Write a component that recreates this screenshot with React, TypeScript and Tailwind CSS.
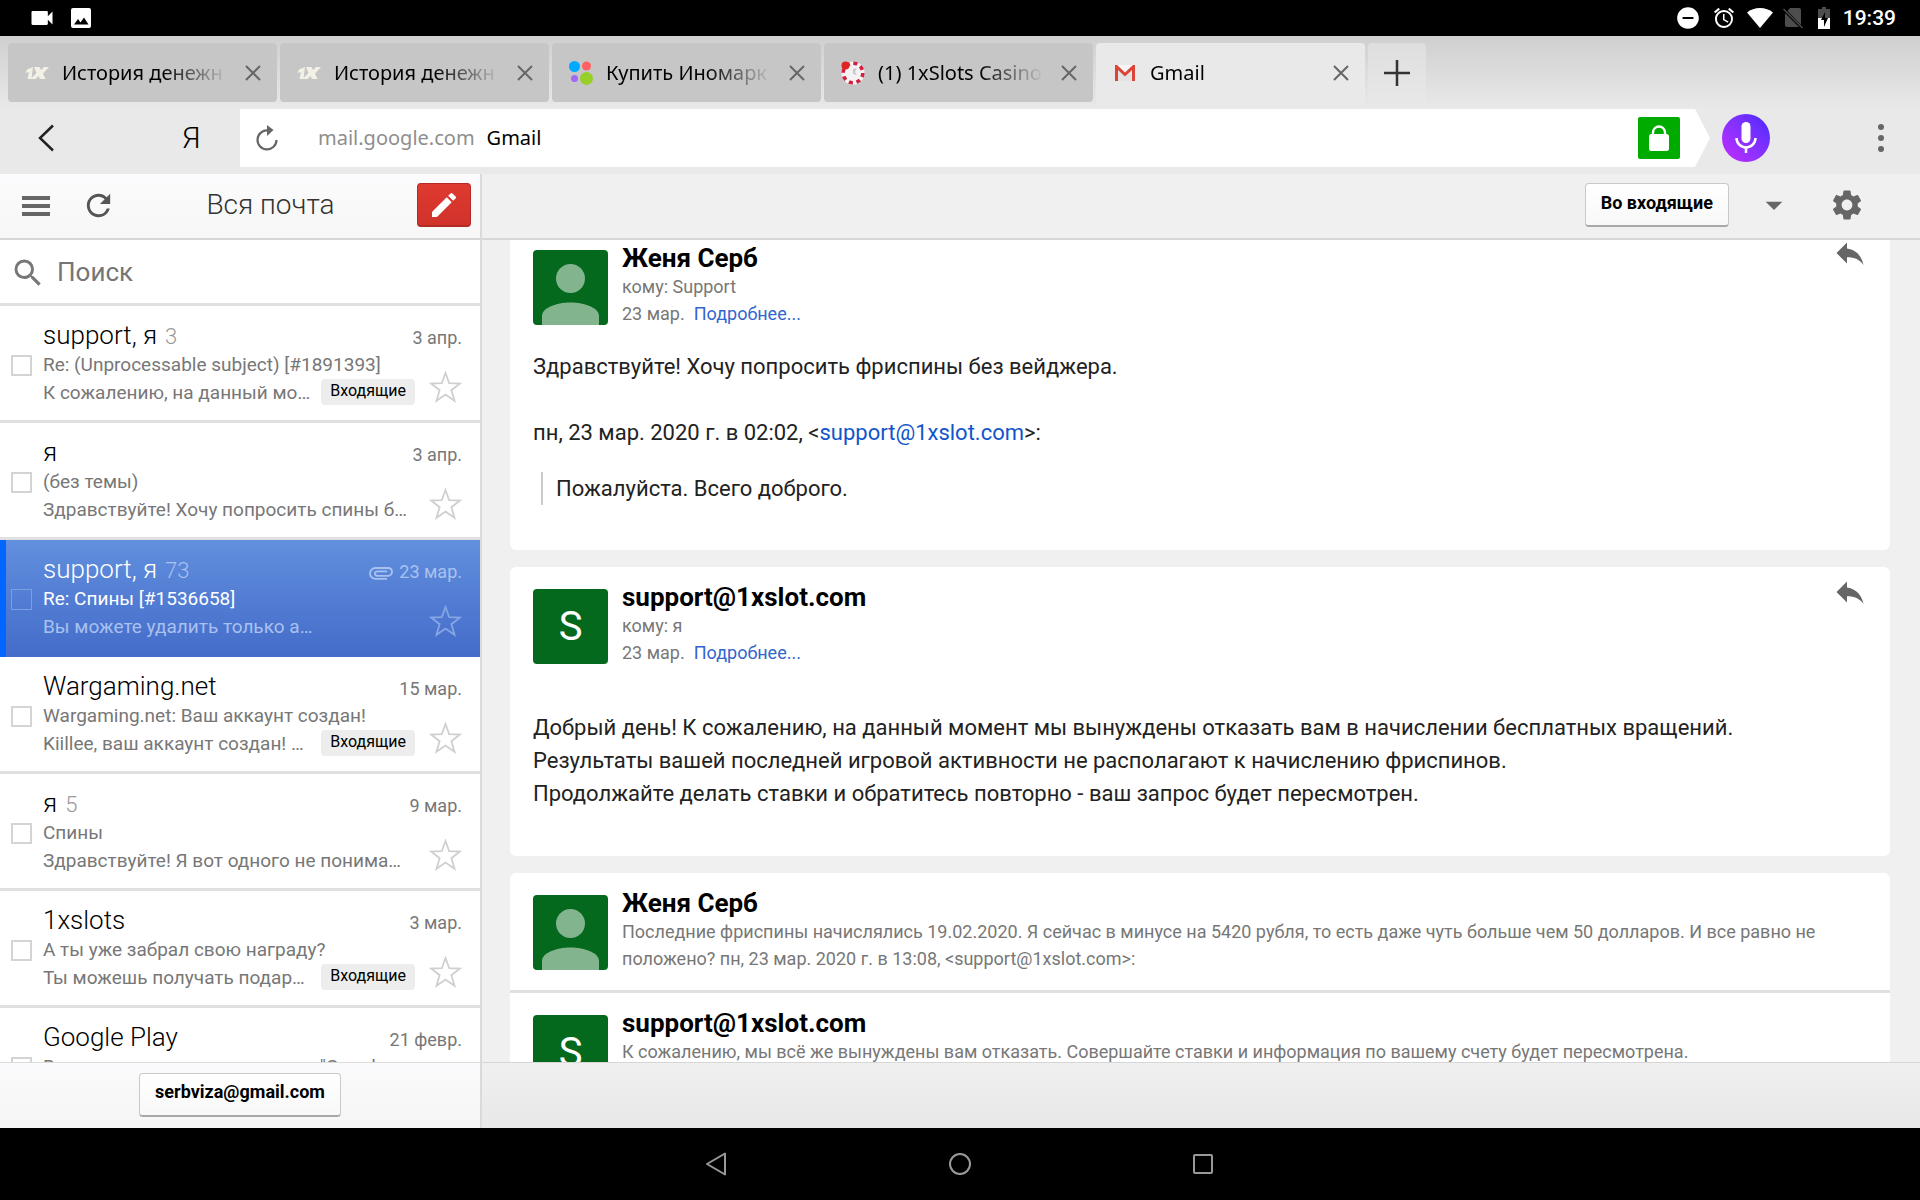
import React from "react";
import {
  MdAlarm,
  MdArrowDropDown,
  MdCreate,
  MdRefresh,
  MdRemoveCircle,
  MdReply,
  MdSearch,
  MdSettings,
  MdVideocam,
} from "react-icons/md";

/* ---------- Small drawings ---------- */

const CloseIcon = () => (
  <svg viewBox="0 0 16 16" className="size-4" fill="none" stroke="#666" strokeWidth="2">
    <path d="M1 1l14 14M15 1L1 15" />
  </svg>
);

const BetIcon = () => (
  <svg viewBox="0 0 24 24" className="size-6">
    <path d="M2 8.500 8 6 6.500 18H2.500L4 11 .5 12z" fill="#f3f0e6" />
    <path d="M9 6h5.500l1.500 3L19 6h5l-6 6.500L20.500 18H15l-1.500-3L10.500 18H5.500l6-6z" fill="#f3f0e6" />
  </svg>
);

const DotsIcon = () => (
  <svg viewBox="0 0 24 24" className="size-6">
    <circle cx="5.500" cy="5.500" r="5.500" fill="#00aaff" />
    <circle cx="17.500" cy="5" r="4.500" fill="#ff6163" />
    <circle cx="5.500" cy="17.500" r="3.500" fill="#a169f7" />
    <circle cx="17.500" cy="17.500" r="6.500" fill="#97cf26" />
  </svg>
);

const ChipIcon = () => (
  <svg viewBox="0 0 24 24" className="size-6">
    <circle cx="12" cy="12" r="11.500" fill="#f6f4f4" />
    <circle cx="12" cy="12" r="9.800" fill="none" stroke="#d3203f" strokeWidth="3.600" strokeDasharray="4.100 3.600" />
    <circle cx="12" cy="12" r="7.500" fill="#f4f3f3" />
    <path d="M12 8l4-1-2 4 2 3-4-1z" fill="#c9c9cc" />
    <circle cx="4.500" cy="4.500" r="4" fill="#e02420" />
  </svg>
);

const GmailIcon = () => (
  <svg viewBox="0 0 24 24" className="size-6">
    <path d="M2 4h20v16H2z" fill="#e3e3e3" />
    <path d="M3 4h18l-9 8z" fill="#f5f5f5" />
    <path d="M2 20V4h2L12 11.500 20 4h2v16h-3V9L12 15.500 5 9v11z" fill="#db4437" />
  </svg>
);

const StarIcon = ({ selected }: { selected?: boolean }) => (
  <svg viewBox="0 0 33 32" className="h-8 w-[33px]" fill="none" stroke={selected ? "#86a6e4" : "#cfcfcf"} strokeWidth="1.800">
    <path d="M16.500 2l3.700 10.200L31 12.500l-8.600 6.700 3.100 10.600-9-6.200-9 6.200 3.100-10.600L2 12.500l10.800-.3z" />
  </svg>
);

const ClipIcon = () => (
  <svg viewBox="0 0 24 13" className="mr-[6px] inline-block h-[13px] w-6" fill="none" stroke="#a9c1ee" strokeWidth="1.800">
    <path d="M18 11.800H6.500C3.200 11.800 1 9.300 1 6.500S3.200 1 6.500 1H19c2.300 0 4 1.600 4 3.800s-1.700 4-4 4H8.500C7 8.800 6 7.800 6 6.500s1-2.200 2.500-2.200H18" />
  </svg>
);

const Person = () => (
  <svg viewBox="0 0 75 75" className="size-[75px] rounded">
    <rect width="75" height="75" fill="#04691d" />
    <circle cx="37.500" cy="28.500" r="14.500" fill="#82b48e" />
    <path d="M9 75v-9c0-8 14-13.500 28.500-13.500S66 58 66 66v9z" fill="#82b48e" />
  </svg>
);

/* ---------- Data ---------- */

const tabs = [
  { title: "История денежн", icon: <BetIcon /> },
  { title: "История денежн", icon: <BetIcon /> },
  { title: "Купить Иномарк", icon: <DotsIcon /> },
  { title: "(1) 1xSlots Casino", icon: <ChipIcon /> },
  { title: "Gmail", icon: <GmailIcon />, active: true },
];

type Mail = {
  from: string;
  count?: string;
  date: string;
  subject: string;
  snippet: string;
  inbox?: boolean;
  clip?: boolean;
  selected?: boolean;
};

const mails: Mail[] = [
  { from: "support, я", count: "3", date: "3 апр.", subject: "Re: (Unprocessable subject) [#1891393]", snippet: "К сожалению, на данный мо…", inbox: true },
  { from: "я", date: "3 апр.", subject: "(без темы)", snippet: "Здравствуйте! Хочу попросить спины б…" },
  { from: "support, я", count: "73", date: "23 мар.", subject: "Re: Спины [#1536658]", snippet: "Вы можете удалить только а…", clip: true, selected: true },
  { from: "Wargaming.net", date: "15 мар.", subject: "Wargaming.net: Ваш аккаунт создан!", snippet: "Kiillee, ваш аккаунт создан! …", inbox: true },
  { from: "я", count: "5", date: "9 мар.", subject: "Спины", snippet: "Здравствуйте! Я вот одного не понима…" },
  { from: "1xslots", date: "3 мар.", subject: "А ты уже забрал свою награду?", snippet: "Ты можешь получать подар…", inbox: true },
  { from: "Google Play", date: "21 февр.", subject: "Вы присоединились к проекту \"Google", snippet: "" },
];

/* ---------- Pieces ---------- */

function StatusBar() {
  return (
    <div className="flex h-9 shrink-0 items-center bg-black pr-6 pl-7 text-white">
      <MdVideocam className="size-7" />
      <svg viewBox="0 0 20 20" className="ml-[15px] size-5">
        <rect width="20" height="20" rx="2" fill="#fff" />
        <path d="M3 16.500l4-5.500 2.500 3.500 3.500-5 4.500 7z" fill="#000" />
      </svg>
      <div className="ml-auto flex items-center">
        <MdRemoveCircle className="mr-[11px] size-[26px]" />
        <MdAlarm className="mr-[11px] size-6" />
        <svg viewBox="0 0 26 20" className="mr-[10px] h-5 w-[26px]" fill="#fff">
          <path d="M13 20L0 4.500C3.500 1.500 8 0 13 0s9.500 1.500 13 4.500z" />
        </svg>
        <svg viewBox="0 0 20 22" className="mr-[15px] h-[22px] w-5">
          <path d="M7 1h9a2 2 0 012 2v15L4.500 4zM2 6l14 14H4a2 2 0 01-2-2z" fill="#4d4d4d" />
          <path d="M.5 2l19 19" stroke="#4d4d4d" strokeWidth="1.500" />
        </svg>
        <svg viewBox="0 0 12 22" className="mr-[13px] h-[22px] w-3">
          <path d="M4 0h4v2h4v20H0V2h4z" fill="#4d4d4d" />
          <path d="M0 11h12v11H0z" fill="#fff" />
          <path d="M7 5L3 13h3v7l4-9H7z" fill="#000" />
        </svg>
        <span className="text-[21px] leading-9 font-medium">19:39</span>
      </div>
    </div>
  );
}

function TabStrip() {
  return (
    <div className="flex h-[73px] shrink-0 gap-[3px] bg-linear-to-b from-[#cfcfcf] to-[#e9e9e9] px-2 pt-[7px] font-['Noto_Sans',sans-serif]">
      {tabs.map((tab, i) => (
        <div
          key={i}
          className={
            tab.active
              ? "flex h-[66px] w-[269px] items-center rounded-t bg-[#e9e9e9] pb-[7px]"
              : "flex h-[59px] w-[269px] items-center rounded bg-[#c6c6c6]"
          }
        >
          <button className="flex min-w-0 flex-1 items-center pt-px pl-[17px] text-left">
            {tab.icon}
            <span className="ml-[13px] w-[166px] text-xl whitespace-nowrap text-black [mask-image:linear-gradient(to_right,#000_60%,transparent)]">
              {tab.title}
            </span>
          </button>
          <button aria-label="Закрыть вкладку" className="mr-4 shrink-0">
            <CloseIcon />
          </button>
        </div>
      ))}
      <button aria-label="Новая вкладка" className="flex h-[59px] w-[58px] items-center justify-center rounded-t bg-linear-to-b from-[#dedede] to-[#e8e8e8]">
        <svg viewBox="0 0 26 26" className="size-[26px]" stroke="#333" strokeWidth="2.500">
          <path d="M13 0v26M0 13h26" />
        </svg>
      </button>
    </div>
  );
}

function AddressBar() {
  return (
    <div className="flex h-[65px] shrink-0 items-start bg-[#e9e9e9] font-['Noto_Sans',sans-serif]">
      <div className="flex h-[58px] w-60 items-center">
        <button aria-label="Назад" className="ml-[38px]">
          <svg viewBox="0 0 16 28" className="h-7 w-4" fill="none" stroke="#222" strokeWidth="2.500">
            <path d="M15 1.500L2 14l13 12.500" />
          </svg>
        </button>
        <button className="ml-[128px] font-[Roboto] text-[30px] leading-none font-light text-black">Я</button>
      </div>
      <div className="flex h-[58px] flex-1 items-center bg-white pl-[15px] [clip-path:polygon(0_0,calc(100%_-_15px)_0,100%_50%,calc(100%_-_15px)_100%,0_100%)]">
        <button aria-label="Обновить">
          <svg viewBox="0 0 24 28" className="h-7 w-6">
            <path d="M13 6.500A9.500 9.500 0 1 0 21.500 16" fill="none" stroke="#666" strokeWidth="2.200" />
            <path d="M12 1v11l6.500-6z" fill="#666" />
          </svg>
        </button>
        <a href="#address" className="ml-[39px] text-xl text-[#8e8e8e]">
          mail.google.com<span className="ml-3 text-black">Gmail</span>
        </a>
        <button aria-label="Защищённое соединение" className="mr-[30px] ml-auto flex size-[42px] items-center justify-center rounded-xs bg-[#00ab00]">
          <svg viewBox="0 0 20 26" className="h-[26px] w-5">
            <path d="M4 11V7.500a6 6 0 0112 0V11" fill="none" stroke="#fff" strokeWidth="2.400" />
            <rect y="9" width="20" height="17" rx="2.500" fill="#fff" />
          </svg>
        </button>
      </div>
      <div className="flex h-[58px] w-[210px] items-center">
        <button aria-label="Голосовой поиск" className="ml-3 flex size-12 items-center justify-center rounded-full bg-linear-to-tr from-[#c325ff] to-[#4725ff]">
          <svg viewBox="0 0 22 32" className="h-8 w-[22px]">
            <rect x="6.500" width="9" height="21" rx="4.500" fill="#fff" />
            <path d="M1.500 16a9.500 9.500 0 0019 0M11 25.500V31" fill="none" stroke="#fff" strokeWidth="2.500" />
          </svg>
        </button>
        <button aria-label="Меню" className="mr-9 ml-auto flex flex-col gap-[5px]">
          <span className="size-[6px] rounded-full bg-[#666]" />
          <span className="size-[6px] rounded-full bg-[#666]" />
          <span className="size-[6px] rounded-full bg-[#666]" />
        </button>
      </div>
    </div>
  );
}

function MailRow({ mail }: { mail: Mail }) {
  const sel = mail.selected;
  return (
    <li
      className={
        sel
          ? "flex h-[117px] bg-linear-to-b from-[#628fde] to-[#446cc9] pr-[18px] pl-[11px] text-[#a9c1ee] shadow-[inset_6px_0_0_#0066ff]"
          : "flex h-[117px] border-b-[3px] border-[#e0e0e0] bg-white pr-[18px] pl-[11px] text-[#777]"
      }
    >
      <input
        type="checkbox"
        aria-label={mail.subject}
        className={
          sel
            ? "mt-[49px] mr-[11px] size-[21px] shrink-0 appearance-none border border-[#7c9fe3]"
            : "mt-[49px] mr-[11px] size-[21px] shrink-0 appearance-none border-2 border-[#d4d4d4]"
        }
      />
      <div className="min-w-0 flex-1 pt-[13px] whitespace-nowrap">
        <div className="flex h-8 items-baseline">
          <span className={sel ? "text-[26px] leading-8 font-light text-white" : "text-[26px] leading-8 font-light text-black"}>{mail.from}</span>
          {mail.count && (
            <span className={sel ? "ml-2 text-[22px] leading-none font-light" : "ml-2 text-[22px] leading-none font-light text-[#999]"}>{mail.count}</span>
          )}
          <span className="ml-auto text-lg leading-none">
            {mail.clip && <ClipIcon />}
            {mail.date}
          </span>
        </div>
        <div className="flex text-[19px] leading-7">
          <div className="min-w-0 flex-1">
            <div className={sel ? "text-white" : ""}>{mail.subject}</div>
            <div className="flex items-start justify-between">
              <span>{mail.snippet}</span>
              {mail.inbox && <span className="rounded bg-[#ededed] px-[9px] pb-[2px] text-base leading-6 text-black">Входящие</span>}
            </div>
          </div>
          <button aria-label="Пометить" className="mt-5 ml-[14px] self-start">
            <StarIcon selected={sel} />
          </button>
        </div>
      </div>
    </li>
  );
}

const plainButton =
  "rounded border border-b-2 border-[#c9c9c9] border-b-[#a8a8a8] bg-linear-to-b from-white to-[#f8f8f8] font-bold text-black text-lg h-11 px-[15px] pb-1";

function Sidebar() {
  return (
    <aside className="flex w-[482px] shrink-0 flex-col border-r-2 border-[#dadada] bg-white">
      <div className="flex h-[66px] shrink-0 items-center border-b-2 border-[#d6d6d6] bg-linear-to-b from-[#fcfbfd] to-[#f6f7f6] pr-[9px] pb-[2px]">
        <button aria-label="Меню" className="ml-[17px]">
          <svg viewBox="0 0 38 38" className="size-[38px]" fill="#666">
            <path d="M5 10h28v4H5zM5 18h28v4H5zM5 26h28v4H5z" />
          </svg>
        </button>
        <button aria-label="Обновить список" className="ml-[26px]">
          <MdRefresh className="size-[35px] text-[#555]" />
        </button>
        <h1 className="flex-1 pl-2 text-center text-[28px] font-light text-[#333]">Вся почта</h1>
        <button aria-label="Написать" className="flex h-11 w-[54px] items-center justify-center rounded border border-b-2 border-[#b32b24] bg-linear-to-b from-[#df3a30] to-[#d0322b] text-white">
          <MdCreate className="size-8" />
        </button>
      </div>
      <label className="flex h-[66px] shrink-0 items-center border-b-[3px] border-[#e0e0e0] bg-white pt-[2px] pl-[10px]">
        <MdSearch className="size-9 text-[#777]" />
        <input type="search" placeholder="Поиск" aria-label="Поиск" className="ml-[11px] min-w-0 flex-1 text-[26px] outline-none placeholder:text-[#757575]" />
      </label>
      <ul className="min-h-0 flex-1 overflow-hidden">
        {mails.map((m, i) => (
          <MailRow key={i} mail={m} />
        ))}
      </ul>
      <div className="flex h-[66px] shrink-0 items-center justify-center border-t border-[#dcdcdc] bg-linear-to-b from-[#fbfafc] to-[#f5f6f5] pb-[2px]">
        <button className={plainButton}>serbviza@gmail.com</button>
      </div>
    </aside>
  );
}

function Header({ kind, name, children, reply }: { kind: "person" | "letter"; name: string; children: React.ReactNode; reply?: boolean }) {
  return (
    <div className="flex items-start">
      <div className="mt-[7px] shrink-0">
        {kind === "person" ? (
          <Person />
        ) : (
          <div className="flex size-[75px] items-center justify-center rounded bg-[#04691d] text-[40px] text-white">S</div>
        )}
      </div>
      <div className="ml-[14px] flex-1 text-lg leading-[27px] text-[#777]">
        <h2 className="text-[26px] leading-[30px] font-bold text-black">{name}</h2>
        {children}
      </div>
      {reply && (
        <button aria-label="Ответить">
          <MdReply className="-mt-2 size-9 text-[#666]" />
        </button>
      )}
    </div>
  );
}

const Details = ({ to }: { to: string }) => (
  <>
    <p>кому: {to}</p>
    <p>
      23 мар.
      <a href="#details" className="ml-[9px] text-[#3366cc]">
        Подробнее...
      </a>
    </p>
  </>
);

function Conversation() {
  return (
    <main className="flex min-w-0 flex-1 flex-col bg-[#f0f0f0]">
      <div className="flex h-[66px] shrink-0 items-center justify-end border-b-2 border-[#d6d6d6] pr-[55px] pb-[2px]">
        <button className={plainButton}>Во входящие</button>
        <button aria-label="Ещё" className="mr-[35px] ml-[25px]">
          <MdArrowDropDown className="size-10 text-[#666]" />
        </button>
        <button aria-label="Настройки">
          <MdSettings className="size-9 text-[#666]" />
        </button>
      </div>
      <div className="min-h-0 flex-1 overflow-hidden pr-[30px] pl-7">
        <article className="-mt-3 mb-[17px] rounded-md bg-white pt-[15px] pr-[22px] pb-[45px] pl-[23px]">
          <Header kind="person" name="Женя Серб" reply>
            <Details to="Support" />
          </Header>
          <div className="mt-[23px] text-[22px] leading-[33px] text-[#222]">
            <p>Здравствуйте! Хочу попросить фриспины без вейджера.</p>
            <p className="mt-[33px]">
              пн, 23 мар. 2020 г. в 02:02, &lt;
              <a href="mailto:support@1xslot.com" className="text-[#1155cc]">
                support@1xslot.com
              </a>
              &gt;:
            </p>
            <blockquote className="mt-[23px] ml-2 border-l-2 border-[#ccc] pl-[13px]">Пожалуйста. Всего доброго.</blockquote>
          </div>
        </article>
        <article className="mb-[17px] rounded-md bg-white pt-[15px] pr-[22px] pb-[46px] pl-[23px]">
          <Header kind="letter" name="support@1xslot.com" reply>
            <Details to="я" />
          </Header>
          <div className="mt-[45px] text-[22px] leading-[33px] text-[#222]">
            <p>Добрый день! К сожалению, на данный момент мы вынуждены отказать вам в начислении бесплатных вращений.</p>
            <p>Результаты вашей последней игровой активности не располагают к начислению фриспинов.</p>
            <p>Продолжайте делать ставки и обратитесь повторно - ваш запрос будет пересмотрен.</p>
          </div>
        </article>
        <div className="rounded-md bg-white">
          <article className="border-b-[3px] border-[#e0e0e0] px-[23px] pt-[15px] pb-[18px]">
            <Header kind="person" name="Женя Серб">
              <p>
                Последние фриспины начислялись 19.02.2020. Я сейчас в минусе на 5420 рубля, то есть даже чуть больше чем 50 долларов. И все равно не положено? пн, 23 мар. 2020 г. в 13:08, &lt;support@1xslot.com&gt;:
              </p>
            </Header>
          </article>
          <article className="px-[23px] pt-[15px] pb-[18px]">
            <Header kind="letter" name="support@1xslot.com">
              <p>К сожалению, мы всё же вынуждены вам отказать. Совершайте ставки и информация по вашему счету будет пересмотрена.</p>
            </Header>
          </article>
        </div>
      </div>
      <div className="h-[66px] shrink-0 border-t border-[#d6d6d6] bg-linear-to-b from-[#f0f0f0] to-[#e8e8e8]" />
    </main>
  );
}

function NavBar() {
  return (
    <nav className="flex h-[72px] shrink-0 items-center justify-center gap-[219px] bg-black">
      <button aria-label="Назад">
        <svg viewBox="0 0 24 24" className="size-6" fill="none" stroke="#999" strokeWidth="2" strokeLinejoin="round">
          <path d="M20 1.500v21L2 12z" />
        </svg>
      </button>
      <button aria-label="Домой">
        <svg viewBox="0 0 24 24" className="size-6" fill="none" stroke="#999" strokeWidth="2">
          <circle cx="12" cy="12" r="10" />
        </svg>
      </button>
      <button aria-label="Недавние">
        <svg viewBox="0 0 24 24" className="size-6" fill="none" stroke="#999" strokeWidth="2">
          <rect x="3" y="3" width="18" height="18" rx="1" />
        </svg>
      </button>
    </nav>
  );
}

export default function App() {
  return (
    <div className="flex h-screen flex-col overflow-hidden bg-[#f0f0f0] font-[Roboto,sans-serif]">
      <StatusBar />
      <TabStrip />
      <AddressBar />
      <div className="flex min-h-0 flex-1">
        <Sidebar />
        <Conversation />
      </div>
      <NavBar />
    </div>
  );
}
